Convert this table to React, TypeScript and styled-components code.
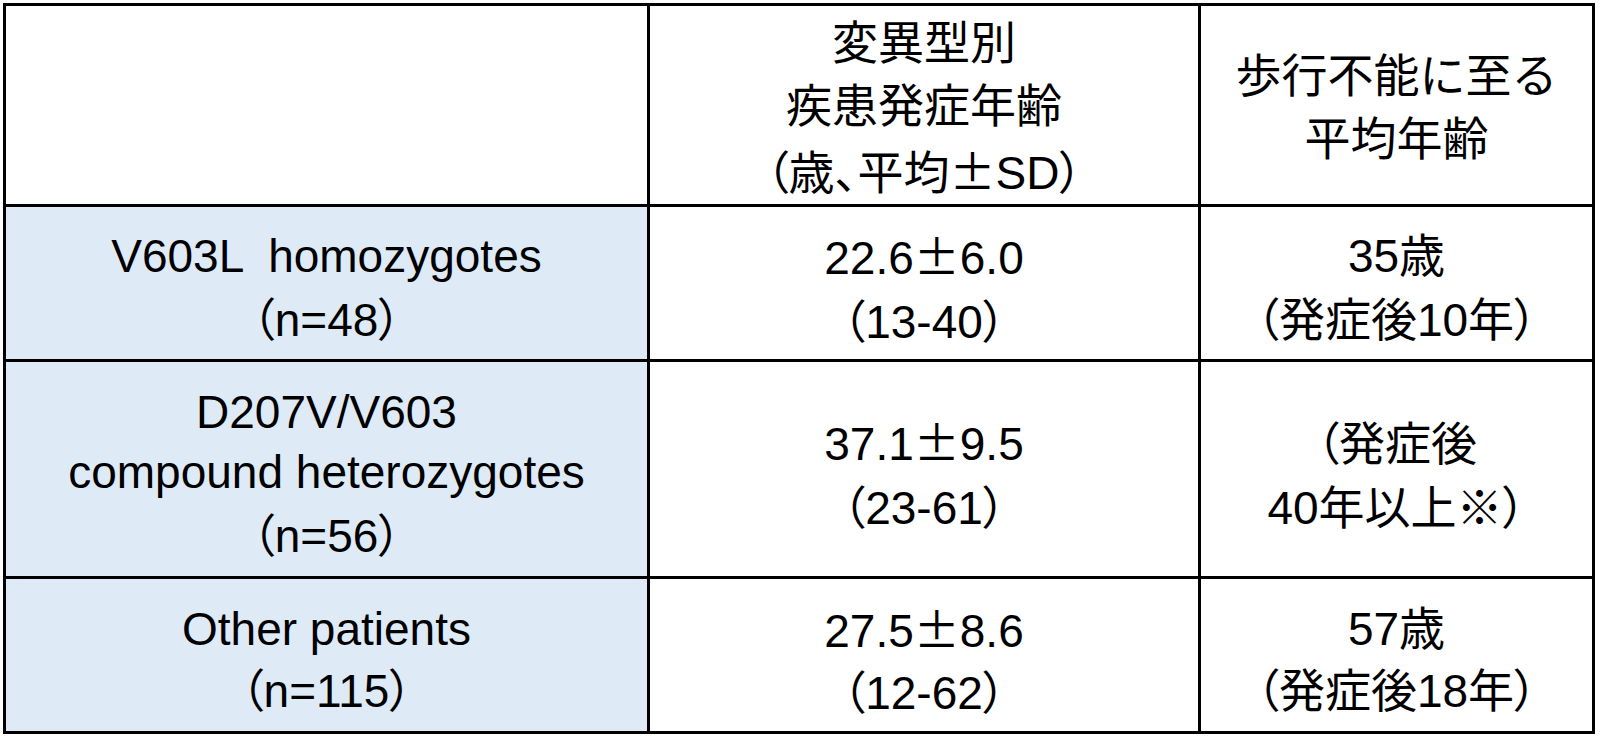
import React from "react";
import styled, { createGlobalStyle } from "styled-components";

const GlobalStyle = createGlobalStyle`
  html, body {
    margin: 0;
    padding: 0;
    background: #ffffff;
  }
  body {
    font-family: "Liberation Sans", "Noto Sans CJK JP", sans-serif;
    color: #000000;
  }
`;

const LINE = "3px solid #000";

const Table = styled.div`
  display: grid;
  grid-template-columns: 644px 551px 394px;
  grid-template-rows: 201px 155px 217px 155px;
  width: max-content;
  margin: 3px 0 0 3px;
  border-left: ${LINE};
  border-top: ${LINE};
`;

const Cell = styled.div<{ $shaded?: boolean; $lh?: number; $head?: boolean }>`
  box-sizing: border-box;
  display: flex;
  flex-direction: column;
  align-items: center;
  justify-content: center;
  padding-top: ${(p) => (p.$head ? 6 : 10)}px;
  border-right: ${LINE};
  border-bottom: ${LINE};
  background: ${(p) => (p.$shaded ? "#deebf7" : "#ffffff")};
  font-size: 46px;
  line-height: ${(p) => p.$lh ?? 60}px;
  text-align: center;
  white-space: pre;
`;

const Line = styled.div`
  display: block;
`;

// full-width brackets and commas are set proportionally, as in the source table
const Tight = styled.span`
  font-family: "Noto Sans CJK JP", sans-serif;
  font-feature-settings: "palt";
`;

// the plus-minus sign is the wide Japanese form
const Wide = styled.span`
  font-family: "Noto Sans CJK JP", sans-serif;
`;

const fmt = (text: string) =>
  text.split(/([（）、±])/).map((part, i) => {
    if (part === "±") return <Wide key={i}>{part}</Wide>;
    if (/^[（）、]$/.test(part)) return <Tight key={i}>{part}</Tight>;
    return part;
  });

interface Row {
  label: string[];
  onset: string[];
  walk: string[];
  lh?: number;
}

const header = {
  onset: ["変異型別", "疾患発症年齢", "（歳、平均±SD）"],
  walk: ["歩行不能に至る", "平均年齢"],
};

const rows: Row[] = [
  {
    label: ["V603L  homozygotes", "（n=48）"],
    onset: ["22.6±6.0", "（13-40）"],
    walk: ["35歳", "（発症後10年）"],
  },
  {
    label: ["D207V/V603", "compound heterozygotes", "（n=56）"],
    onset: ["37.1±9.5", "（23-61）"],
    walk: ["（発症後", "40年以上※）"],
  },
  {
    label: ["Other patients", "（n=115）"],
    onset: ["27.5±8.6", "（12-62）"],
    walk: ["57歳", "（発症後18年）"],
    lh: 58,
  },
];

const lines = (items: string[]) =>
  items.map((t) => <Line key={t}>{fmt(t)}</Line>);

export default function App() {
  return (
    <>
      <GlobalStyle />
      <Table>
        <Cell $head />
        <Cell $head $lh={63}>
          {lines(header.onset)}
        </Cell>
        <Cell $head $lh={63}>
          {lines(header.walk)}
        </Cell>
        {rows.map((row) => (
          <React.Fragment key={row.label[0]}>
            <Cell $shaded $lh={row.lh}>
              {lines(row.label)}
            </Cell>
            <Cell $lh={row.lh}>{lines(row.onset)}</Cell>
            <Cell $lh={row.lh}>{lines(row.walk)}</Cell>
          </React.Fragment>
        ))}
      </Table>
    </>
  );
}
